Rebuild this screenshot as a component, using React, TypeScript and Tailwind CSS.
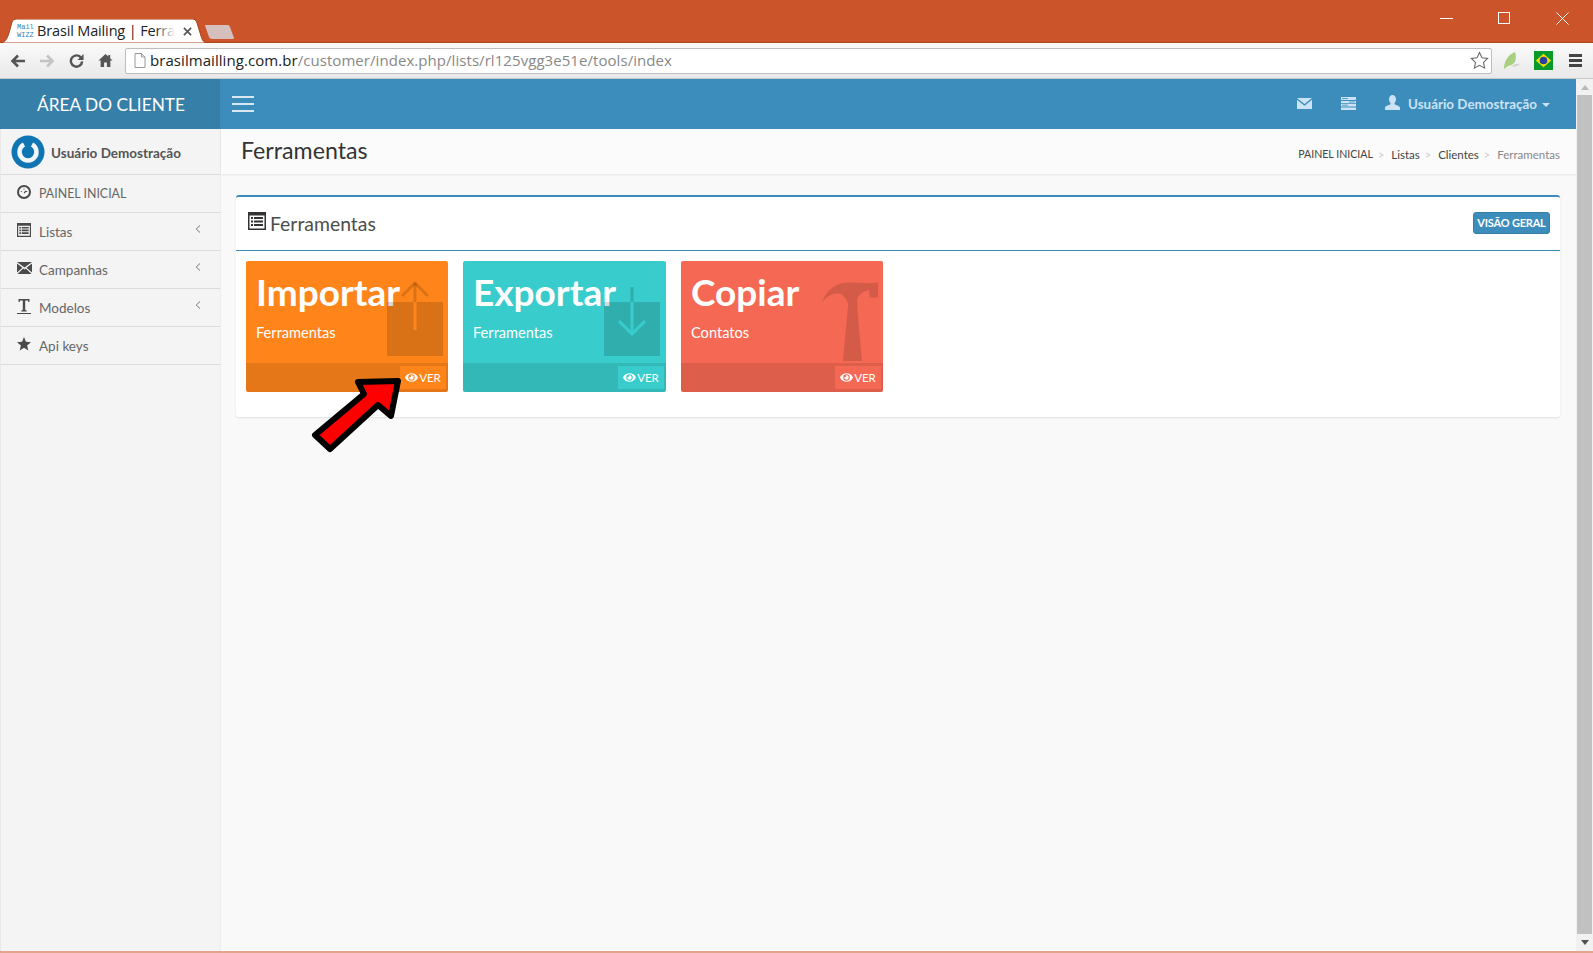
import React from "react";
import { FaEye } from "react-icons/fa";

const lato = "font-['Lato','Liberation_Sans',sans-serif]";

function ListIcon({ className }: { className?: string }) {
  return (
    <svg viewBox="0 0 18 18" className={className}>
      <path fill="currentColor" fillRule="evenodd" d="M0 0h18v18H0zM1.500 3.500v13h15v-13zM3 5h2v2H3zM6 5h9v2H6zM3 8.500h2v2H3zM6 8.500h9v2H6zM3 12h2v2H3zM6 12h9v2H6z" />
    </svg>
  );
}

function SideItem({ icon, label, chevron, small }: { icon: React.ReactNode; label: string; chevron?: boolean; small?: boolean }) {
  return (
    <div className="h-[38px] border-b border-[#dbdbdb] flex items-center pl-[16px] pr-[19px] text-[#666]">
      <span className="w-[22px] flex-none text-[#4a4a4a] -mt-[3px]">{icon}</span>
      <span className={`flex-1 pt-[2px] ${small ? "text-[12.4px]" : "text-[13.5px]"}`}>{label}</span>
      {chevron && (
        <svg viewBox="0 0 6 8" className="w-[6px] h-[8px] -mt-[6px] text-[#777]">
          <path d="M5 .5 1.200 4 5 7.500" fill="none" stroke="currentColor" strokeWidth="1" />
        </svg>
      )}
    </div>
  );
}

function Card({ color, title, sub, width, icon }: { color: string; title: string; sub: string; width: string; icon: React.ReactNode }) {
  return (
    <div className={`relative h-[131px] flex-none rounded-[2px] overflow-hidden flex flex-col text-white ${width} ${color}`}>
      <div className="flex-1 pl-[10px] pt-[7px]">
        <div className="text-[37px] leading-[47px] font-bold whitespace-nowrap">{title}</div>
        <div className="text-[14.6px] leading-[20px] mt-[8px]">{sub}</div>
      </div>
      {icon}
      <div className="h-[29px] bg-[rgba(0,0,0,0.1)] flex justify-end items-center pr-[2px]">
        <div className={`h-[23px] w-[46px] flex items-center justify-center gap-[1px] text-[11.5px] ${color}`}>
          <FaEye className="w-[13px] h-[13px]" />
          <span>VER</span>
        </div>
      </div>
    </div>
  );
}

export default function App() {
  return (
    <div className={`relative w-[1593px] h-[953px] overflow-hidden flex flex-col bg-[#f9f9f9] ${lato}`}>
      {/* browser title bar */}
      <div className="relative h-[43px] flex-none bg-[#cc542a] border-b border-[#a9441f]">
        <div className="absolute left-0 top-[19px] w-[207px] h-[24px]">
          <svg viewBox="0 0 207 24" className="absolute inset-0 w-[207px] h-[24px]">
            <path d="M0 24 C5 24 7 20 9 14 L12 3 C13 1 14 0 17 0 H192 C195 0 196 1 197 4 L201 17 C202 21 204 24 207 24 Z" fill="#ffffff" stroke="#a9441f" strokeWidth="1" />
          </svg>
          <div className="absolute left-[17px] top-[4px] w-[16px] text-[7px] leading-[8px] text-[#2f87b8] font-['Liberation_Mono',monospace] text-center">
            <div>Mail</div>
            <div>WIZZ</div>
          </div>
          <div className="absolute left-[37px] top-[2px] w-[138px] overflow-hidden whitespace-nowrap text-[14.5px] leading-[20px] text-[#222] font-['Open_Sans',sans-serif] tracking-[-0.15px]">
            Brasil Mailing | Ferramentas
            <div className="absolute right-0 top-0 w-[20px] h-full bg-gradient-to-r from-transparent to-white" />
          </div>
          <svg viewBox="0 0 10 10" className="absolute left-[183px] top-[8px] w-[9px] h-[9px]">
            <path d="M1 1l8 8M9 1l-8 8" stroke="#555" strokeWidth="1.800" />
          </svg>
        </div>
        <svg viewBox="0 0 32 16" className="absolute left-[204px] top-[24px] w-[32px] h-[16px]">
          <path d="M1 1.500 Q1 1 2 1 H24 Q25 1 26 3 L30 14 Q30 15 29 15 H8 Q6 15 5 13 Z" fill="#d5c0bd" />
        </svg>
        <div className="absolute right-[2px] top-0 h-[36px] flex items-center text-white">
          <div className="w-[58px] flex justify-center"><div className="w-[13px] h-[1px] bg-white" /></div>
          <div className="w-[58px] flex justify-center"><div className="w-[12px] h-[12px] border border-white" /></div>
          <div className="w-[58px] flex justify-center">
            <svg viewBox="0 0 13 13" className="w-[13px] h-[13px]"><path d="M.5.500l12 12M12.500.500l-12 12" stroke="#fff" strokeWidth="1" /></svg>
          </div>
        </div>
      </div>

      {/* browser toolbar */}
      <div className="h-[36px] flex-none flex items-center bg-gradient-to-b from-[#fafafa] to-[#e9e9e9] border-b border-[#c9c9c9]">
        <div className="w-[125px] flex-none flex items-center">
          <svg viewBox="0 0 16 14" className="w-[16px] h-[14px] ml-[10px]"><path d="M15 7H3M8 1.500 2.500 7 8 12.500" fill="none" stroke="#555" strokeWidth="2.600" /></svg>
          <svg viewBox="0 0 16 14" className="w-[16px] h-[14px] ml-[13px]"><path d="M1 7h12M8 1.500 13.500 7 8 12.500" fill="none" stroke="#c4c4c4" strokeWidth="2.600" /></svg>
          <svg viewBox="0 0 16 16" className="w-[15px] h-[15px] ml-[14px]"><path d="M13 5.200A6 6 0 1 0 14 9" fill="none" stroke="#555" strokeWidth="2.600" /><path d="M15.500 1v6.500H9z" fill="#555" /></svg>
          <svg viewBox="0 0 16 16" className="w-[15px] h-[15px] ml-[14px]"><path d="M8 1 .5 8h2.300v7h3.700v-5h3v5h3.700V8h2.300L13 5.500V2h-2v1.600z" fill="#555" /></svg>
        </div>
        <div className="w-[1367px] h-[26px] flex-none bg-white border border-[#bdbdbd] rounded-[2px] flex items-center pl-[8px] pr-[2px] font-['Open_Sans',sans-serif] text-[15px] tracking-[0.06px]">
          <svg viewBox="0 0 12 15" className="w-[12px] h-[15px] mr-[4px] flex-none"><path d="M1 .5h6.500L11 4v10.500H1zM7.500.5V4H11" fill="none" stroke="#999" /></svg>
          <span className="text-[#222]">brasilmailling.com.br</span>
          <span className="text-[#888] flex-1">/customer/index.php/lists/rl125vgg3e51e/tools/index</span>
          <svg viewBox="0 0 20 20" className="w-[19px] h-[19px]"><path d="M10 1.500l2.600 5.600 6 .7-4.400 4.200 1.200 6L10 15l-5.400 3 1.200-6L1.400 7.800l6-.7z" fill="#fff" stroke="#666" strokeWidth="1.100" /></svg>
        </div>
        <div className="flex-1 flex items-center pl-[10px]">
          <svg viewBox="0 0 20 20" className="w-[20px] h-[20px]"><path d="M2 18C2 10 6 4 13 1c2 6 1 13-7 14z" fill="#a7cf7d" /><path d="M9 16c4 0 7-1 9-3-3-1-6 0-9 3z" fill="#d2d2d2" /></svg>
          <svg viewBox="0 0 20 20" className="w-[19px] h-[19px] ml-[12px]"><rect width="20" height="20" fill="#0a9a2a" /><path d="M10 3l8 7-8 7-8-7z" fill="#f5e100" /><circle cx="10" cy="10" r="4" fill="#2b3f9c" /></svg>
          <div className="ml-[16px] w-[13px] flex flex-col gap-[2px]">
            <div className="h-[3px] bg-[#444]" /><div className="h-[3px] bg-[#444]" /><div className="h-[3px] bg-[#444]" />
          </div>
        </div>
      </div>

      {/* page with scrollbar */}
      <div className="flex-1 min-h-0 flex">
        <div className="flex-1 min-w-0 flex flex-col">
          {/* app header */}
          <div className="h-[50px] flex-none flex bg-[#3c8dbc] text-white">
            <div className="w-[220px] flex-none bg-[#367fa9] flex items-center justify-center text-[17.3px] pl-[2px] pt-[2px]">ÁREA DO CLIENTE</div>
            <div className="flex-1 flex items-center pl-[12px]">
              <div className="w-[22px] flex flex-col gap-[5px]">
                <div className="h-[2px] bg-[#d8e8f2]" /><div className="h-[2px] bg-[#d8e8f2]" /><div className="h-[2px] bg-[#d8e8f2]" />
              </div>
              <div className="flex-1" />
              <div className="flex items-center text-[#cbe3f4] pr-[26px]">
                <svg viewBox="0 0 15 11" className="w-[15px] h-[11px]"><path d="M0 0h15L7.500 6zM0 1.800v9.200h15V1.800L7.500 7.800z" fill="currentColor" /></svg>
                <svg viewBox="0 0 15 13" className="w-[15px] h-[13px] ml-[29px]"><path d="M0 0h15v3H0zM0 4h15v2.200H0zM0 7h15v2.500H0zM0 10.500h15V13H0z" fill="currentColor" /><path d="M1 1.500h6M8 5h6M1 8.200h6" stroke="#3c8dbc" strokeWidth=".8" /></svg>
                <svg viewBox="0 0 15 15" className="w-[15px] h-[15px] ml-[29px] -mt-[3px]">
                  <path fill="currentColor" d="M7.500 0C5.500 0 4 1.800 4 4.200 4 5.800 4.700 7.200 5.500 8v1.300C4 10.300 0 10.800 0 13v2h15v-2c0-2.200-4-2.700-5.500-3.700V8c.8-.8 1.500-2.200 1.500-3.800C11 1.800 9.500 0 7.500 0z" />
                </svg>
                <span className="text-[13.4px] font-bold ml-[8px] mt-[1px] whitespace-nowrap">Usuário Demostração</span>
                <svg viewBox="0 0 8 4" className="w-[8px] h-[4px] ml-[5px] mt-[3px]"><path d="M0 0h8L4 4z" fill="currentColor" /></svg>
              </div>
            </div>
          </div>

          <div className="flex-1 min-h-0 flex">
            {/* sidebar */}
            <div className="w-[221px] flex-none bg-[#f4f4f4] border-r border-[#ededed] border-l border-l-[#e8e8e8]">
              <div className="h-[46px] border-b border-[#dbdbdb] flex items-center pl-[10px]">
                <svg viewBox="0 0 34 34" className="w-[34px] h-[34px] flex-none">
                  <circle cx="17" cy="17" r="16.500" fill="#0f76b3" />
                  <path d="M13 9.500a8.500 8.500 0 1 0 8 0" fill="none" stroke="#f2f6f9" strokeWidth="4.500" />
                </svg>
                <span className="ml-[6px] mt-[4px] text-[13.5px] font-bold text-[#555]">Usuário Demostração</span>
              </div>
              <SideItem
                small
                label="PAINEL INICIAL"
                icon={
                  <svg viewBox="0 0 14 14" className="w-[14px] h-[14px]"><circle cx="7" cy="7" r="6" fill="none" stroke="currentColor" strokeWidth="2" /><path d="M3.800 6.500h1M6.500 4h1M9.200 6.500h1M7 8l2-2" stroke="currentColor" strokeWidth="1.100" /></svg>
                }
              />
              <SideItem label="Listas" chevron icon={<ListIcon className="w-[14px] h-[14px]" />} />
              <SideItem
                label="Campanhas"
                chevron
                icon={<svg viewBox="0 0 15 12" className="w-[15px] h-[12px]"><path d="M0 0h15L7.500 5.500zM0 1.500v9L5.500 5.800zM15 1.500v9L9.500 5.800zM.5 12l5.700-5.500 1.300 1 1.300-1L14.500 12z" fill="currentColor" /></svg>}
              />
              <SideItem
                label="Modelos"
                chevron
                icon={<svg viewBox="0 0 14 15" className="w-[14px] h-[15px]"><path d="M1.500 0h11v3h-1l-.5-1.500H8.200V11l1.500.5V12.500H4.300v-1l1.500-.5V1.500H3L2.500 3h-1zM0 14h14v1H0z" fill="currentColor" /></svg>}
              />
              <SideItem
                label="Api keys"
                icon={<svg viewBox="0 0 14 14" className="w-[14px] h-[14px]"><path d="M7 0l1.900 4.800 5.100.4-3.900 3.300 1.200 5L7 10.800l-4.300 2.700 1.200-5L0 5.200l5.100-.4z" fill="currentColor" /></svg>}
              />
            </div>

            {/* main */}
            <div className="flex-1 min-w-0 flex flex-col">
              <div className="h-[45px] flex-none bg-[#fbfbfb] shadow-[0_1px_2px_rgba(0,0,0,0.08)] flex items-center justify-between pl-[20px] pr-[16px]">
                <div className="text-[23.2px] text-[#333] -mt-[2px]">Ferramentas</div>
                <div className="flex items-center text-[11.5px] text-[#444] mt-[7px]">
                  <span className="text-[10.6px]">PAINEL INICIAL</span>
                  <span className="text-[#ccc] mx-[5px] text-[11px]">&gt;</span>
                  <span className="ml-[2px]">Listas</span>
                  <span className="text-[#ccc] mx-[5px] text-[11px]">&gt;</span>
                  <span className="ml-[2px]">Clientes</span>
                  <span className="text-[#ccc] mx-[5px] text-[11px]">&gt;</span>
                  <span className="ml-[2px] text-[#888]">Ferramentas</span>
                </div>
              </div>
              <div className="pl-[15px] pr-[16px] pt-[21px]">
                <div className="h-[222px] bg-white border-t-2 border-[#3c8dbc] rounded-[3px] shadow-[0_1px_2px_rgba(0,0,0,0.1)]">
                  <div className="h-[54px] border-b border-[#3c8dbc] flex items-center justify-between pl-[12px] pr-[10px]">
                    <div className="flex items-center text-[#4d4d4d] text-[19.4px]">
                      <ListIcon className="w-[18px] h-[18px] -mt-[4px] mr-[4px] text-[#333]" />
                      <span>Ferramentas</span>
                    </div>
                    <div className="h-[22px] w-[77px] -mt-[2px] pt-[2px] rounded-[3px] bg-[#3c8dbc] border border-[#367fa9] text-white text-[11px] font-bold tracking-[-0.2px] whitespace-nowrap flex items-center justify-center">VISÃO GERAL</div>
                  </div>
                  <div className="pl-[10px] pt-[10px] flex gap-[15px]">
                    <Card
                      color="bg-[#ff851b]"
                      width="w-[202px]"
                      title="Importar"
                      sub="Ferramentas"
                      icon={
                        <svg viewBox="0 0 60 80" className="absolute left-[139px] top-[19px] w-[60px] h-[80px]">
                          <rect x="2" y="22" width="56" height="54" fill="#000" fillOpacity=".15" />
                          <path d="M30 3V22" stroke="#000" strokeOpacity=".15" strokeWidth="3" />
                          <path d="M17 16 30 3l13 13" fill="none" stroke="#000" strokeOpacity=".15" strokeWidth="3" />
                          <path d="M30 22V50" stroke="#ff851b" strokeWidth="3" />
                        </svg>
                      }
                    />
                    <Card
                      color="bg-[#39cccc]"
                      width="w-[203px]"
                      title="Exportar"
                      sub="Ferramentas"
                      icon={
                        <svg viewBox="0 0 60 80" className="absolute left-[138px] top-[19px] w-[60px] h-[80px]">
                          <rect x="3" y="22" width="56" height="54" fill="#000" fillOpacity=".15" />
                          <path d="M31 7V22" stroke="#000" strokeOpacity=".15" strokeWidth="3" />
                          <path d="M31 22V54M18 41l13 13 13-13" fill="none" stroke="#39cccc" strokeWidth="3" />
                        </svg>
                      }
                    />
                    <Card
                      color="bg-[#f56954]"
                      width="w-[202px]"
                      title="Copiar"
                      sub="Contatos"
                      icon={
                        <svg viewBox="0 0 70 90" className="absolute left-[134px] top-[14px] w-[70px] h-[90px]">
                          <path fill="#000" fillOpacity=".13" d="M6.700 27C12 15 20 8 32 7.500c6-.2 13 .5 20 .7L63 7.500V22.500H55L54 15C48 17 43 19 42 26C42 30 43 33 42.500 35L47 86H28L32.500 35C34 30 33 24 26 19C20 17 13 20 6.700 27Z" />
                        </svg>
                      }
                    />
                  </div>
                </div>
              </div>
            </div>
          </div>
        </div>

        {/* scrollbar */}
        <div className="w-[17px] flex-none bg-[#f1f1f1] flex flex-col items-center">
          <svg viewBox="0 0 8 5" className="w-[8px] h-[5px] mt-[6px] mb-[5px]"><path d="M4 0l4 5H0z" fill="#b8b8b8" /></svg>
          <div className="w-[15px] flex-1 bg-[#c1c1c1]" />
          <svg viewBox="0 0 8 5" className="w-[8px] h-[5px] mt-[6px] mb-[6px]"><path d="M0 0h8L4 5z" fill="#505050" /></svg>
        </div>
      </div>

      <div className="h-[2px] flex-none bg-[#e3a48c]" />

      {/* annotation arrow */}
      <svg viewBox="0 0 100 85" className="absolute left-[308px] top-[373px] w-[100px] h-[85px]">
        <path d="M50 9 90 8 83 43 70 32 22 76 7 62 56 21Z" fill="#ff0000" stroke="#000" strokeWidth="6" strokeLinejoin="round" />
      </svg>
    </div>
  );
}
